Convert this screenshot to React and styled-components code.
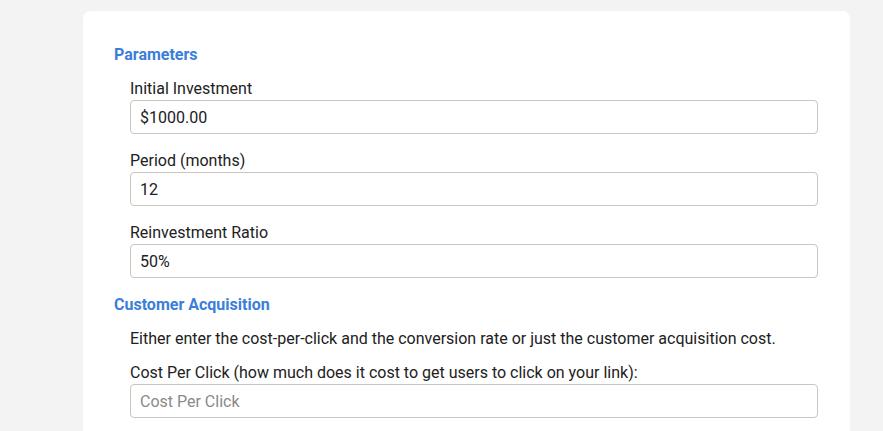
import React from "react";
import styled, { createGlobalStyle } from "styled-components";

const GlobalStyle = createGlobalStyle`
	body {
		margin: 0;
		background: #f3f3f3;
		font-family: Roboto, "Liberation Sans", sans-serif;
		color: #212121;
	}
`;

function App() {
	return (
		<>
			<GlobalStyle />
			<Page>
				<Card>
					<Heading>Parameters</Heading>
					<Section>
						<Field label="Initial Investment" value="$1000.00" />
						<Field label="Period (months)" value="12" />
						<Field label="Reinvestment Ratio" value="50%" />
					</Section>
					<Heading>Customer Acquisition</Heading>
					<Section>
						<Note>
							Either enter the cost-per-click and the conversion rate or just the
							customer acquisition cost.
						</Note>
						<Field
							label="Cost Per Click (how much does it cost to get users to click on your link):"
							placeholder="Cost Per Click"
						/>
					</Section>
				</Card>
			</Page>
		</>
	);
}

function Field({ label, value, placeholder }) {
	return (
		<FieldWrap>
			<Label>{label}</Label>
			<Input defaultValue={value} placeholder={placeholder} />
		</FieldWrap>
	);
}

export default App;

const Page = styled.div`
	padding: 11px 33px 0 83px;
`;

const Card = styled.div`
	background: #ffffff;
	border-radius: 7px;
	padding: 34px 32px 40px 31px;
	min-height: 500px;
`;

const Heading = styled.h3`
	margin: 0 0 14px;
	font-size: 16px;
	line-height: 20px;
	font-weight: 700;
	color: #3a7edb;
`;

const Section = styled.div`
	padding-left: 16px;
	margin-bottom: 17px;
`;

const FieldWrap = styled.div`
	display: flex;
	flex-direction: column;
	margin-bottom: 17px;

	&:last-child {
		margin-bottom: 0;
	}
`;

const Label = styled.label`
	font-size: 16px;
	line-height: 20px;
	margin-bottom: 1px;
`;

const Input = styled.input`
	box-sizing: border-box;
	height: 34px;
	width: 100%;
	border: 1px solid #c9c5bf;
	border-radius: 4px;
	padding: 0 9px;
	font-family: Roboto, "Liberation Sans", sans-serif;
	font-size: 16px;
	color: #212121;
	background: #fff;
	outline: none;

	&::placeholder {
		color: #8a8a8a;
	}
`;

const Note = styled.p`
	margin: 0 0 14px;
	font-size: 16px;
	line-height: 20px;
`;
